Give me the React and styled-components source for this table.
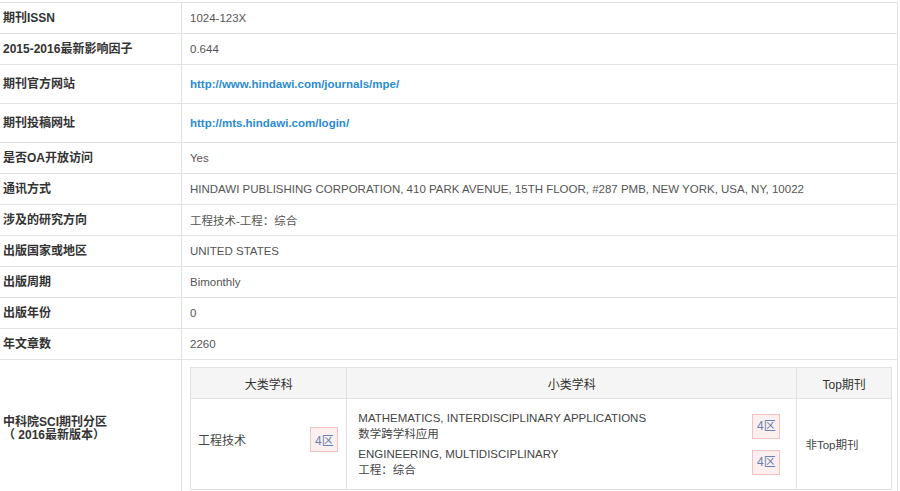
import React from 'react';
import styled, { createGlobalStyle } from 'styled-components';

const GlobalStyle = createGlobalStyle`
  body {
    margin: 0;
    background: #fff;
    font-family: "Liberation Sans", Arial, "Noto Sans CJK SC", sans-serif;
    font-size: 12px;
    color: #555;
  }
`;

const Page = styled.div`
  width: 900px;
  overflow: hidden;
  padding-top: 2px;
`;

const InfoTable = styled.table`
  border-collapse: collapse;
  margin-left: -1px;
  width: 899px;
`;

const Row = styled.tr`
  height: ${(p) => p.$h || 31}px;
`;

const Label = styled.td`
  width: 178px;
  border: 1px solid #e2e2e2;
  padding: 0 0 0 3px;
  font-weight: bold;
  color: #333;
  vertical-align: middle;
  line-height: 13px;
`;

const Value = styled.td`
  border: 1px solid #e2e2e2;
  padding: ${(p) => (p.$nested ? '7px 5px 8px 8px' : '0 0 0 8px')};
  color: #555;
  font-size: 11.5px;
  vertical-align: middle;
`;

const Link = styled.a`
  color: #2a8bd4;
  font-weight: bold;
  text-decoration: none;
`;

const SubTable = styled.table`
  border-collapse: collapse;
  width: 702px;
`;

const Head = styled.th`
  height: 30px;
  background: #f5f5f5;
  border: 1px solid #e2e2e2;
  font-weight: normal;
  font-size: 12px;
  color: #333;
  text-align: center;
  width: ${(p) => p.$w}px;
  padding: 0;
`;

const Cell = styled.td`
  height: 90px;
  border: 1px solid #e2e2e2;
  padding: ${(p) => p.$pad || '0 8px'};
  vertical-align: middle;
  color: #444;
`;

const Split = styled.div`
  display: flex;
  align-items: center;
  justify-content: space-between;
  font-size: 12px;
  margin-bottom: 10px;
`;

const Stack = styled.div`
  display: flex;
  flex-direction: column;
  gap: 4px;
`;

const Entry = styled.div`
  display: flex;
  align-items: center;
  justify-content: space-between;
  padding-right: 8px;
  line-height: 16px;
`;

const Badge = styled.span`
  display: inline-flex;
  align-items: center;
  justify-content: center;
  width: 26px;
  height: 23px;
  border: 1px solid #f2c2c2;
  background: #fcefef;
  color: #6a82b0;
  font-size: 12px;
`;

const rows = [
  ['期刊ISSN', '1024-123X'],
  ['2015-2016最新影响因子', '0.644'],
  ['期刊官方网站', 'http://www.hindawi.com/journals/mpe/', true],
  ['期刊投稿网址', 'http://mts.hindawi.com/login/', true],
  ['是否OA开放访问', 'Yes'],
  ['通讯方式', 'HINDAWI PUBLISHING CORPORATION, 410 PARK AVENUE, 15TH FLOOR, #287 PMB, NEW YORK, USA, NY, 10022'],
  ['涉及的研究方向', '工程技术-工程：综合'],
  ['出版国家或地区', 'UNITED STATES'],
  ['出版周期', 'Bimonthly'],
  ['出版年份', '0'],
  ['年文章数', '2260'],
];

const App = () => (
  <Page>
    <GlobalStyle />
    <InfoTable>
      <tbody>
        {rows.map(([label, value, link]) => (
          <Row key={label} $h={link ? 39 : 31}>
            <Label>{label}</Label>
            <Value>{link ? <Link href={value}>{value}</Link> : value}</Value>
          </Row>
        ))}
        <Row>
          <Label>
            中科院SCI期刊分区
            <br />（ 2016最新版本）
          </Label>
          <Value $nested>
            <SubTable>
              <thead>
                <tr>
                  <Head $w={156}>大类学科</Head>
                  <Head $w={451}>小类学科</Head>
                  <Head $w={94}>Top期刊</Head>
                </tr>
              </thead>
              <tbody>
                <tr>
                  <Cell $pad="0 8px 0 7px">
                    <Split>
                      工程技术
                      <Badge>4区</Badge>
                    </Split>
                  </Cell>
                  <Cell $pad="0 8px 0 11px">
                    <Stack>
                      <Entry>
                        <div>
                          MATHEMATICS, INTERDISCIPLINARY APPLICATIONS
                          <br />数学跨学科应用
                        </div>
                        <Badge>4区</Badge>
                      </Entry>
                      <Entry>
                        <div>
                          ENGINEERING, MULTIDISCIPLINARY
                          <br />工程：综合
                        </div>
                        <Badge>4区</Badge>
                      </Entry>
                    </Stack>
                  </Cell>
                  <Cell>非Top期刊</Cell>
                </tr>
              </tbody>
            </SubTable>
          </Value>
        </Row>
      </tbody>
    </InfoTable>
  </Page>
);

export default App;
